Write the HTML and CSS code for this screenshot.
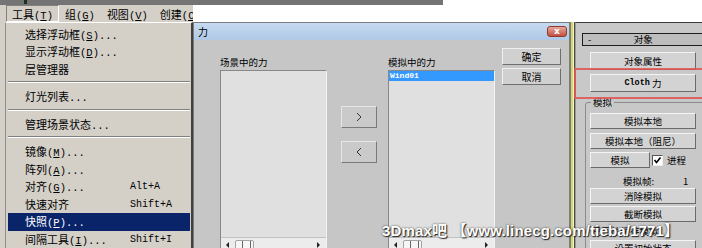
FILE: index.html
```html
<!DOCTYPE html>
<html lang="zh">
<head>
    <meta charset="UTF-8">
    <title>力</title>
    <link rel="stylesheet" href="styles.css">
</head>
<body>
    <div class="topbar">
        <div class="topbar-dark"><span class="tb-icon"></span></div>
    </div>

    <div class="main">
        <!-- tools menu -->
        <div class="tools">
            <div class="menubar">
                <span class="mb-item mb-open">工具<span class="en">(<u>T</u>)</span></span>
                <span class="mb-item">组<span class="en">(<u>G</u>)</span></span>
                <span class="mb-item">视图<span class="en">(<u>V</u>)</span></span>
                <span class="mb-item">创建<span class="en">(<u>C</u>)</span></span>
            </div>
            <ul class="menu">
                <li class="mi"><span class="lbl">选择浮动框<span class="en">(<u>S</u>)...</span></span></li>
                <li class="mi"><span class="lbl">显示浮动框<span class="en">(<u>D</u>)...</span></span></li>
                <li class="mi"><span class="lbl">层管理器</span></li>
                <li class="sep"></li>
                <li class="mi"><span class="lbl">灯光列表<span class="en">...</span></span></li>
                <li class="sep"></li>
                <li class="mi"><span class="lbl">管理场景状态<span class="en">...</span></span></li>
                <li class="sep"></li>
                <li class="mi"><span class="lbl">镜像<span class="en">(<u>M</u>)...</span></span></li>
                <li class="mi"><span class="lbl">阵列<span class="en">(<u>A</u>)...</span></span></li>
                <li class="mi"><span class="lbl">对齐<span class="en">(<u>G</u>)...</span></span><span class="key">Alt+A</span></li>
                <li class="mi"><span class="lbl">快速对齐</span><span class="key">Shift+A</span></li>
                <li class="mi on"><span class="lbl">快照<span class="en">(<u>P</u>)...</span></span></li>
                <li class="mi"><span class="lbl">间隔工具<span class="en">(<u>I</u>)...</span></span><span class="key">Shift+I</span></li>
            </ul>
        </div>

        <!-- forces dialog -->
        <div class="dlg-col">
            <div class="dialog">
                <div class="titlebar">
                    <span>力</span>
                    <span class="close">x</span>
                </div>
                <div class="dlg-body">
                    <div class="force-list">
                        <div class="cap">场景中的力</div>
                        <div class="listbox">
                            <div class="items"></div>
                            <div class="hscroll">
                                <span class="arr-l"></span>
                                <span class="thumb"></span>
                                <span class="arr-r"></span>
                            </div>
                        </div>
                    </div>

                    <div class="move">
                        <div class="mv-btn">
                            <svg width="6" height="10" viewBox="0 0 6 10"><polyline points="1,1 5,5 1,9" fill="none" stroke="#333" stroke-width="1"/></svg>
                        </div>
                        <div class="mv-btn">
                            <svg width="6" height="10" viewBox="0 0 6 10"><polyline points="5,1 1,5 5,9" fill="none" stroke="#333" stroke-width="1"/></svg>
                        </div>
                    </div>

                    <div class="force-list list-b">
                        <div class="cap">模拟中的力</div>
                        <div class="listbox">
                            <div class="items">
                                <div class="sel">Wind01</div>
                            </div>
                            <div class="hscroll">
                                <span class="arr-l"></span>
                                <span class="thumb"></span>
                                <span class="arr-r"></span>
                            </div>
                        </div>
                    </div>

                    <div class="dlg-btns">
                        <div class="dbtn">确定</div>
                        <div class="dbtn">取消</div>
                    </div>
                </div>
            </div>
        </div>

        <!-- command panel -->
        <div class="panel-col">
            <div class="panel">
                <div class="edge"></div>
                <div class="cmd">
                    <div class="rollout-head"><span>-</span><span class="rh-title">对象</span></div>
                    <div class="cbtn first">对象属性</div>
                    <div class="cbtn second"><span class="en-s">Cloth</span>&nbsp;力</div>

                    <fieldset class="sim">
                        <legend>模拟</legend>
                        <div class="cbtn">模拟本地</div>
                        <div class="cbtn gap4">模拟本地（阻尼）</div>
                        <div class="sim-row">
                            <div class="cbtn short">模拟</div>
                            <span class="check">
                                <svg width="9" height="9" viewBox="0 0 9 9"><polyline points="1.5,4 3.5,6.5 7.5,1.5" fill="none" stroke="#000" stroke-width="1.6"/></svg>
                            </span>
                            <span class="chk-lbl">进程</span>
                        </div>
                        <div class="frames"><span class="fr-lbl">模拟帧:</span><span>1</span></div>
                        <div class="cbtn">消除模拟</div>
                        <div class="cbtn gap2">截断模拟</div>
                        <div class="cache-note">已回放缓存模拟</div>
                        <div class="cbtn">设置初始状态</div>
                    </fieldset>
                </div>
            </div>
        </div>
    </div>

    <div class="mark"></div>
    <div class="watermark">3Dmax吧 【www.linecg.com/tieba/1771】</div>
</body>
</html>
```

FILE: styles.css
```css
* {
    box-sizing: border-box;
}
body {
    margin: 0;
    width: 702px;
    height: 248px;
    overflow: hidden;
    position: relative;
    background: #fff;
    font-family: "Noto Sans CJK SC", sans-serif;
    color: #000;
}
.topbar {
    height: 5px;
    display: flex;
}
.topbar-dark {
    width: 443px;
    background: #747474;
    padding-left: 24px;
}
.tb-icon {
    display: block;
    width: 3px;
    height: 4px;
    background: #1d331d;
}
.main {
    display: flex;
    height: 243px;
}

/* menu */
.tools {
    width: 193px;
    flex-shrink: 0;
    background: #d4d0c8;
    display: flex;
    flex-direction: column;
}
.menubar {
    height: 18px;
    display: flex;
    padding-left: 6px;
    font-size: 11px;
    overflow: hidden;
    white-space: nowrap;
}
.mb-item {
    padding: 0 5px;
    border: 1px solid transparent;
    line-height: 16px;
}
.mb-open {
    border-color: #808080 #fff #fff #808080;
}
.en {
    font-family: "Liberation Mono", monospace;
    font-size: 10.5px;
}
.key {
    font-family: "Liberation Mono", monospace;
    font-size: 10px;
}
.menu {
    list-style: none;
    margin: 0 0 0 5px;
    padding: 3px 1px 0 2px;
    flex: 1;
    border-left: 1px solid #8c8c8c;
    border-top: 1px solid #fff;
    border-right: 2px solid #404040;
    font-size: 11px;
}
.mi {
    height: 17.5px;
    line-height: 17.5px;
    padding-left: 17px;
    display: flex;
    white-space: nowrap;
}
.mi .lbl {
    width: 105px;
}
.mi.on {
    background: #0a246a;
    color: #fff;
}
.sep {
    height: 10px;
    padding-top: 3px;
}
.sep::before {
    content: "";
    display: block;
    border-top: 1px solid #808080;
    border-bottom: 1px solid #fff;
}

/* dialog */
.dlg-col {
    width: 377px;
    flex-shrink: 0;
    padding-top: 17px;
    display: flex;
    flex-direction: column;
}
.dialog {
    flex: 1;
    border: 1px solid #7c7c7c;
    border-bottom: 0;
    background: #c6c6c6;
    display: flex;
    flex-direction: column;
}
.titlebar {
    height: 17px;
    background: linear-gradient(#c6daf0, #b0c9e6);
    display: flex;
    align-items: center;
    justify-content: space-between;
    padding: 0 2px 0 4px;
    font-size: 10px;
}
.close {
    width: 20px;
    height: 11px;
    border: 1px solid #8e3a30;
    border-radius: 3px;
    background: linear-gradient(#e6a89c, #c4503e);
    color: #fff;
    font: bold 9px "DejaVu Sans", sans-serif;
    display: flex;
    align-items: center;
    justify-content: center;
    line-height: 1;
}
.dlg-body {
    flex: 1;
    display: flex;
    padding-left: 26px;
    font-size: 9.5px;
}
.force-list {
    width: 107px;
    padding-top: 14px;
    display: flex;
    flex-direction: column;
}
.list-b {
    margin-left: 11px;
}
.cap {
    line-height: 16px;
}
.listbox {
    height: 200px;
    border: 1px solid;
    border-color: #888 #f2f2f2 transparent #888;
    background: #e0e0e0;
    display: flex;
    flex-direction: column;
}
.items {
    height: 166px;
}
.sel {
    height: 10px;
    line-height: 10px;
    background: #3399ff;
    color: #fff;
    font: bold 8px "Liberation Mono", monospace;
    padding-left: 1px;
}
.hscroll {
    height: 14px;
    border-top: 1px solid #c2c2c2;
    background: #ececec;
    display: flex;
    align-items: center;
    padding-left: 5px;
}
.arr-l, .arr-r {
    border: 3px solid transparent;
}
.arr-l {
    border-right-color: #222;
    border-left-width: 0;
}
.arr-r {
    border-left-color: #222;
    border-right-width: 0;
    margin-left: 63px;
}
.thumb {
    width: 19px;
    height: 10px;
    margin-left: 6px;
    border: 1px solid #a4a4a4;
    border-radius: 2px;
    background: repeating-linear-gradient(to right, transparent 0 6px, #666 6px 7px, transparent 7px 8px) #f6f6f6;
}
.move {
    width: 36px;
    margin-left: 14px;
    padding-top: 66px;
    display: flex;
    flex-direction: column;
    gap: 13px;
}
.mv-btn {
    height: 22px;
    border: 1px solid;
    border-color: #e6e6e6 #7a7a7a #7a7a7a #e6e6e6;
    background: #cacaca;
    display: flex;
    align-items: center;
    justify-content: center;
}
.dlg-btns {
    width: 59px;
    margin-left: 7px;
    padding-top: 8px;
    display: flex;
    flex-direction: column;
    gap: 3px;
}
.dbtn {
    height: 17px;
    border: 1px solid;
    border-color: #f0f0f0 #6e6e6e #6e6e6e #f0f0f0;
    background: #d0d0d0;
    font-size: 10px;
    display: flex;
    align-items: center;
    justify-content: center;
}

/* command panel */
.panel-col {
    flex: 1;
    min-width: 0;
    overflow: hidden;
    padding-top: 17px;
    display: flex;
    flex-direction: column;
}
.panel {
    flex: 1;
    display: flex;
}
.edge {
    width: 5px;
    flex-shrink: 0;
    background: linear-gradient(to right, #7a7a7a 0 1px, #d6da5c 1px 3px, #f2f2dc 3px 4px, #4a4a4a 4px 5px);
}
.cmd {
    flex: 1;
    min-width: 0;
    background: #c8c8c8;
    border-top: 1px solid #3a3a3a;
    border-left: 1px solid #9a9a9a;
    font-size: 9.5px;
    overflow: hidden;
}
.rollout-head {
    width: 126px;
    height: 13px;
    margin: 10px 0 0 6px;
    border: 1px solid #1e1e1e;
    background: #bdbdbd;
    display: flex;
    line-height: 11px;
    padding: 0 12px 0 5px;
}
.rh-title {
    flex: 1;
    text-align: center;
}
.cbtn {
    width: 106px;
    height: 16px;
    border: 1px solid;
    border-color: #f4f4f4 #6a6a6a #6a6a6a #f4f4f4;
    background: #d3d3d3;
    display: flex;
    align-items: center;
    justify-content: center;
    white-space: nowrap;
}
.cbtn.first, .cbtn.second {
    height: 18px;
    margin-left: 14px;
}
.cbtn.first {
    margin-top: 6px;
}
.cbtn.second {
    margin-top: 4px;
}
.en-s {
    font-family: "Liberation Mono", monospace;
    font-size: 8.5px;
    font-weight: bold;
}
.sim {
    width: 130px;
    margin: 4px 0 0 9px;
    padding: 5px 0 0 4px;
    border: 1px solid #8c8c8c;
    border-radius: 3px;
}
.sim legend {
    padding: 0 2px;
    margin-left: 1px;
    line-height: 12px;
}
.gap4 {
    margin-top: 4px;
}
.gap2 {
    margin-top: 2px;
}
.sim-row {
    margin-top: 3px;
    display: flex;
    align-items: center;
}
.cbtn.short {
    width: 60px;
}
.check {
    width: 11px;
    height: 11px;
    margin-left: 2px;
    border: 1px solid;
    border-color: #555 #eee #eee #555;
    background: #fff;
    display: flex;
    align-items: center;
    justify-content: center;
}
.chk-lbl {
    margin-left: 4px;
}
.frames {
    height: 15px;
    margin-top: 5px;
    padding-left: 33px;
    display: flex;
    align-items: center;
}
.fr-lbl {
    width: 60px;
}
.cache-note {
    height: 18px;
    line-height: 18px;
    padding-left: 2px;
}

/* overlays */
.mark {
    position: absolute;
    left: 574px;
    top: 68px;
    width: 140px;
    height: 31px;
    border: 2px solid rgba(226, 82, 82, 0.85);
}
.watermark {
    position: absolute;
    left: 382px;
    top: 219px;
    font: bold 15px "Liberation Sans", "Noto Sans CJK SC", sans-serif;
    letter-spacing: 0.15px;
    color: #fff;
    white-space: nowrap;
    text-shadow: 0 0 2px #333, 1px 1px 1px #222;
}
```
